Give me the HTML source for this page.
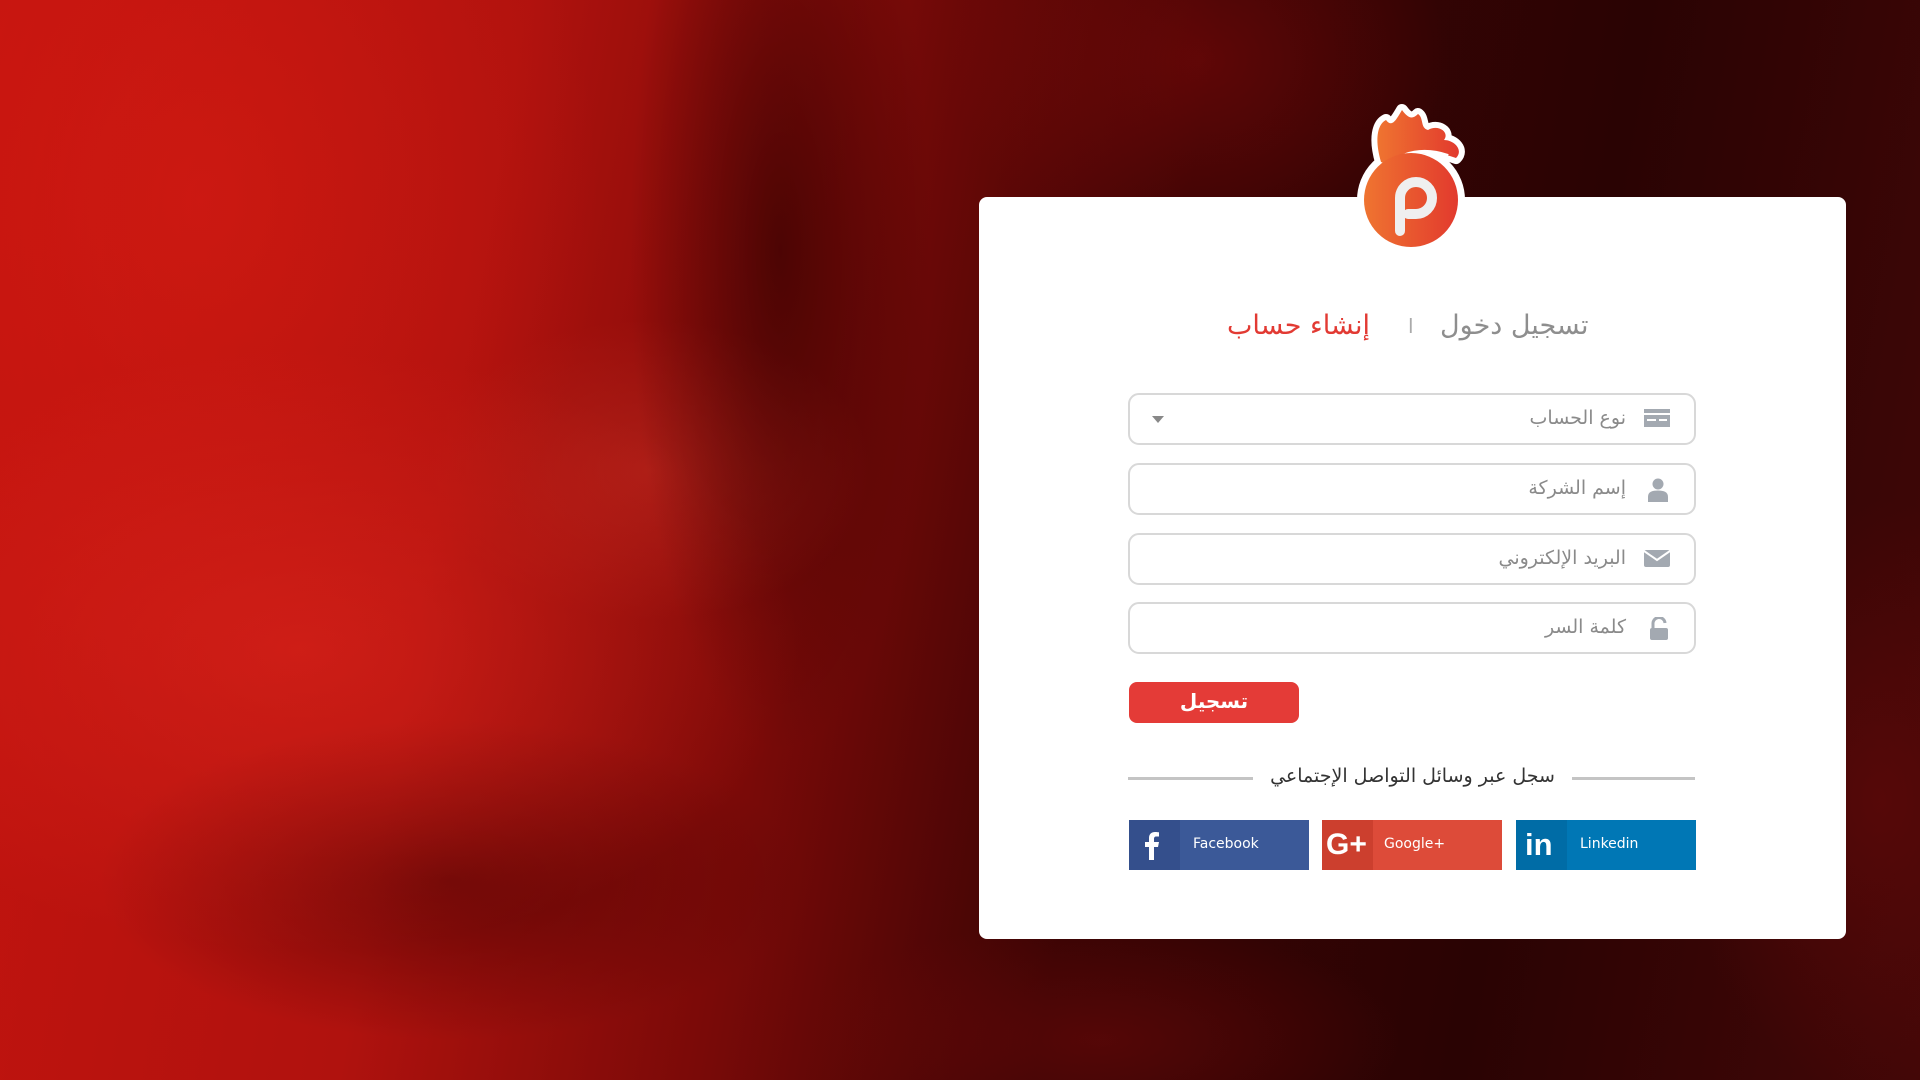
<!DOCTYPE html>
<html><head><meta charset="utf-8">
<style>
*{margin:0;padding:0;box-sizing:border-box}
body{width:1920px;height:1080px;overflow:hidden;position:relative;font-family:"DejaVu Sans","Liberation Sans",sans-serif;
background:linear-gradient(100deg,#c4140f 0%,#b0120e 25%,#7a0a08 42%,#3a0404 58%,#2a0303 78%,#420707 100%);}
.bg1{position:absolute;left:0;top:0;width:1920px;height:1080px;
background:radial-gradient(ellipse 500px 300px at 300px 650px,rgba(230,40,30,.5),transparent),
radial-gradient(ellipse 400px 500px at 200px 200px,rgba(220,30,20,.5),transparent),
radial-gradient(ellipse 350px 160px at 450px 880px,rgba(60,0,0,.55),transparent),
radial-gradient(ellipse 150px 500px at 780px 250px,rgba(40,0,0,.6),transparent),
radial-gradient(ellipse 220px 150px at 650px 470px,rgba(190,40,30,.6),transparent),
radial-gradient(ellipse 250px 200px at 1200px 60px,rgba(140,10,10,.45),transparent),
radial-gradient(ellipse 200px 300px at 1880px 800px,rgba(110,10,10,.5),transparent),
radial-gradient(ellipse 300px 120px at 1100px 1040px,rgba(120,10,10,.45),transparent)}
.card{position:absolute;left:979px;top:197px;width:867px;height:742px;background:#fff;border-radius:8px}
.tabs{position:absolute;top:308px;height:40px;font-size:27px;white-space:nowrap}
.field{position:absolute;left:1128px;width:568px;height:52px;border:2px solid #d8d8d8;border-radius:11px}
.field span{position:absolute;right:68px;top:12px;font-size:19px;color:#8a8a8a;direction:rtl}
.field svg{position:absolute;right:24px;top:13px}
.btn{position:absolute;left:1129px;top:682px;width:170px;height:41px;background:#e43b37;border-radius:8px;color:#fff;font-size:20px;font-weight:bold;text-align:center;line-height:38px}
.line{position:absolute;top:777px;height:3px;background:#c4c4c4}
.soc{position:absolute;top:820px;width:180px;height:50px;color:#fff;font-family:"DejaVu Sans",sans-serif;font-size:14px}
.soc .ic{position:absolute;left:0;top:0;width:51px;height:50px}
.soc .t{position:absolute;left:64px;top:16px}
</style></head><body>
<div class="bg1"></div>
<div class="card"></div>
<svg style="position:absolute;left:1348px;top:98px" width="126" height="156" viewBox="0 0 126 156">
<defs><linearGradient id="g" x1="0" x2="1"><stop offset="0" stop-color="#ef7430"/><stop offset="1" stop-color="#e23a2e"/></linearGradient></defs>
<g stroke="#fff" stroke-width="12" stroke-linejoin="round" fill="#fff">
<path d="M33 64 C26 40 30 26 38 22 C44 30 48 22 54 12 C60 20 64 22 70 16 C76 20 72 30 80 32 C90 26 102 34 96 42 C106 42 116 52 108 60 C92 54 74 54 60 60 C50 64 42 68 33 64Z"/>
<circle cx="63" cy="102" r="48"/></g>
<path d="M33 64 C26 40 30 26 38 22 C44 30 48 22 54 12 C60 20 64 22 70 16 C76 20 72 30 80 32 C90 26 102 34 96 42 C106 42 116 52 108 60 C92 54 74 54 60 60 C50 64 42 68 33 64Z" fill="url(#g)"/>
<path d="M42 68 C54 54 76 50 100 58" stroke="#fff" stroke-width="4" fill="none"/>
<circle cx="63" cy="102" r="47" fill="url(#g)"/>
<path d="M52 133 V100 A16 16 0 1 1 68 116 H60" stroke="#efefef" stroke-width="10" fill="none" stroke-linecap="round" stroke-linejoin="round"/>
</svg>
<div class="tabs" style="left:1440px;top:310px;color:#8e8e8e">تسجيل دخول</div>
<div class="tabs" style="left:1408px;color:#aaa;font-size:20px;top:314px">ا</div>
<div class="tabs" style="left:1227px;top:310px;color:#e23a33">إنشاء حساب</div>

<div class="field" style="top:393px"><span>نوع الحساب</span>
<svg width="26" height="20" viewBox="0 0 26 20"><rect x="0" y="1" width="26" height="18" fill="#a3a9b1"/><rect x="0" y="5" width="26" height="2" fill="#fff"/><rect x="3" y="11" width="9" height="2" fill="#fff"/><rect x="15" y="11" width="8" height="2" fill="#fff"/></svg>
<div style="position:absolute;left:22px;top:21px;border-left:6px solid transparent;border-right:6px solid transparent;border-top:7px solid #888"></div></div>
<div class="field" style="top:463px"><span>إسم الشركة</span>
<svg width="24" height="24" viewBox="0 0 24 24"><circle cx="12" cy="6" r="5.5" fill="#a3a9b1"/><path d="M2 24 V19 C2 14 6 12.5 12 12.5 C18 12.5 22 14 22 19 V24Z" fill="#a3a9b1"/></svg></div>
<div class="field" style="top:533px"><span>البريد الإلكتروني</span>
<svg width="26" height="20" viewBox="0 0 26 20"><rect x="0" y="2" width="26" height="17" rx="2" fill="#a3a9b1"/><path d="M0 3 L13 12 L26 3" stroke="#fff" stroke-width="2" fill="none"/></svg></div>
<div class="field" style="top:602px"><span>كلمة السر</span>
<svg width="22" height="24" viewBox="0 0 22 24"><path d="M5 11 V7 A6 6 0 0 1 17 6" stroke="#a3a9b1" stroke-width="3" fill="none"/><rect x="2" y="11" width="18" height="12" rx="2" fill="#a3a9b1"/></svg></div>

<div class="btn">تسجيل</div>
<div class="line" style="left:1128px;width:125px"></div>
<div class="line" style="left:1572px;width:123px"></div>
<div style="position:absolute;left:1253px;top:765px;width:319px;text-align:center;font-size:19px;color:#333;direction:rtl">سجل عبر وسائل التواصل الإجتماعي</div>

<div class="soc" style="left:1129px;background:#3b5998"><div class="ic" style="background:#344f8c"></div><svg style="position:absolute;left:15px;top:12px" width="16" height="28" viewBox="0 0 16 28"><path d="M10 28 V15 H14 L15 10 H10 V7 C10 5.5 10.5 4.5 12.5 4.5 H15 V0.3 C14 0.2 12.5 0 11 0 C7.5 0 5 2 5 6 V10 H1 V15 H5 V28Z" fill="#fff"/></svg><div class="t">Facebook</div></div>
<div class="soc" style="left:1322px;background:#dd4b39"><div class="ic" style="background:#cc3f2e"></div><div style="position:absolute;left:4px;top:8px;font-size:30px;font-weight:bold;font-family:'Liberation Sans',sans-serif">G+</div><div class="t" style="left:62px">Google+</div></div>
<div class="soc" style="left:1516px;background:#0077b5"><div class="ic" style="background:#006ca6"></div><div style="position:absolute;left:9px;top:7px;font-size:31px;font-weight:bold;font-family:'Liberation Sans',sans-serif">in</div><div class="t">Linkedin</div></div>
</body></html>
